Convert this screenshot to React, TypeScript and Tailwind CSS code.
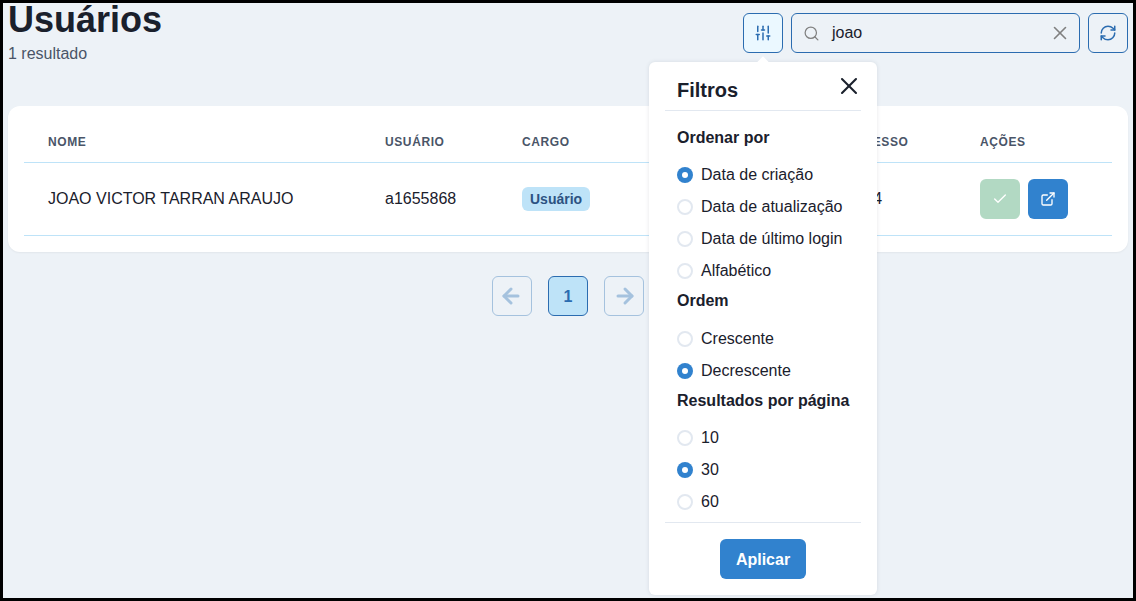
import { ArrowLeft, ArrowRight, Check, ExternalLink, RefreshCw, Search, SlidersVertical, X } from 'lucide-react';

const sortOptions = ['Data de criação', 'Data de atualização', 'Data de último login', 'Alfabético'];
const orderOptions = ['Crescente', 'Decrescente'];
const perPageOptions = ['10', '30', '60'];

const rowGrid = 'grid grid-cols-[337px_137px_280px_178px_156px] items-center';

function Radio({ label, checked }: { label: string; checked?: boolean }) {
  return (
    <label className="flex h-8 items-center gap-2">
      {checked ? (
        <span className="flex h-4 w-4 items-center justify-center rounded-full bg-[#3182ce]">
          <span className="h-[6px] w-[6px] rounded-full bg-white" />
        </span>
      ) : (
        <span className="h-4 w-4 rounded-full border-2 border-[#e2e8f0]" />
      )}
      <span>{label}</span>
    </label>
  );
}

function FilterPopover() {
  return (
    <div className="absolute left-[646px] top-[59px] z-10 flex h-[533px] w-[228px] flex-col rounded-md bg-white px-4 pb-4 shadow-[0_0_4px_rgba(45,55,72,0.12)]">
      <div className="absolute -top-[4px] left-[110px] h-2 w-2 rotate-45 bg-white" />
      <div className="relative flex h-[49px] shrink-0 items-center border-b border-[#e2e8f0] pl-3 pt-[7px]">
        <h2 className="text-[20px] font-semibold">Filtros</h2>
        <X className="absolute right-[-2px] top-[10px] h-7 w-7 text-[#1a202c]" strokeWidth={1.75} />
      </div>
      <div className="pl-3">
        <p className="mt-[15px] font-bold leading-6">Ordenar por</p>
        <div className="mt-[9px]">
          {sortOptions.map((option, i) => (
            <Radio key={option} label={option} checked={i === 0} />
          ))}
        </div>
        <p className="mt-[2px] font-bold leading-6">Ordem</p>
        <div className="mt-[10px]">
          {orderOptions.map((option, i) => (
            <Radio key={option} label={option} checked={i === 1} />
          ))}
        </div>
        <p className="mt-[2px] font-bold leading-6">Resultados por página</p>
        <div className="mt-[9px]">
          {perPageOptions.map((option, i) => (
            <Radio key={option} label={option} checked={i === 1} />
          ))}
        </div>
      </div>
      <div className="mt-[4px] border-t border-[#e2e8f0]" />
      <div className="mt-4 flex justify-center">
        <button className="h-10 rounded-md bg-[#3182ce] px-4 pt-px font-bold text-white">Aplicar</button>
      </div>
    </div>
  );
}

export default function App() {
  return (
    <div className="relative h-[601px] w-[1136px] overflow-hidden border-[3px] border-black bg-[#edf2f7] px-[5px] font-['Liberation_Sans',sans-serif] text-[#1a202c]">
      {/* Header */}
      <div className="flex items-start justify-between">
        <div>
          <h1 className="text-4xl font-bold leading-[34px]">Usuários</h1>
          <p className="mt-[5px] leading-6 text-[#4a5568]">1 resultado</p>
        </div>
        <div className="mt-[10px] flex gap-2">
          <button className="flex h-10 w-10 items-center justify-center rounded-md border border-[#2b6cb0] bg-[#ebf8ff] text-[#2b6cb0]">
            <SlidersVertical className="h-[18px] w-[18px]" />
          </button>
          <div className="flex h-10 w-[289px] items-center rounded-md border border-[#2b6cb0] pl-[11px] pr-[8px]">
            <Search className="h-[17px] w-[17px] text-[#808080]" strokeWidth={1.75} />
            <span className="ml-3 flex-1">joao</span>
            <X className="h-[22px] w-[22px] text-[#808080]" strokeWidth={1.75} />
          </div>
          <button className="flex h-10 w-10 items-center justify-center rounded-md border border-[#2b6cb0] text-[#2b6cb0]">
            <RefreshCw className="h-[18px] w-[18px]" />
          </button>
        </div>
      </div>

      {/* Table */}
      <div className="mt-[40px] rounded-xl bg-white px-4 pb-4 pt-4 shadow-[0_1px_2px_rgba(0,0,0,0.05)]">
        <div className={`${rowGrid} h-[41px] border-b border-[#bee3f8] text-xs font-bold uppercase tracking-wider text-[#4a5568]`}>
          <span className="pl-6">Nome</span>
          <span className="pl-6">Usuário</span>
          <span className="pl-6">Cargo</span>
          <span className="pl-6">Último acesso</span>
          <span className="pl-6">Ações</span>
        </div>
        <div className={`${rowGrid} h-[73px] border-b border-[#bee3f8]`}>
          <span className="pl-6">JOAO VICTOR TARRAN ARAUJO</span>
          <span className="pl-6">a1655868</span>
          <span className="pl-6">
            <span className="inline-block rounded-md bg-[#bee3f8] px-2 text-sm font-bold leading-6 text-[#2c5282]">Usuário</span>
          </span>
          <span className="pl-6">15/08/2024</span>
          <span className="flex gap-2 pl-6">
            <button className="flex h-10 w-10 items-center justify-center rounded-md bg-[#b2d9c3] text-white">
              <Check className="h-4 w-4" />
            </button>
            <button className="flex h-10 w-10 items-center justify-center rounded-md bg-[#3182ce] text-white">
              <ExternalLink className="h-4 w-4" />
            </button>
          </span>
        </div>
      </div>

      {/* Pagination */}
      <div className="mt-6 flex justify-center gap-4">
        <button className="flex h-10 w-10 items-center justify-center rounded-md border border-[#a5c2de] text-[#a5c2de]">
          <ArrowLeft className="mr-[2px] h-6 w-6" strokeWidth={3} />
        </button>
        <button className="flex h-10 w-10 items-center justify-center rounded-md border border-[#2b6cb0] bg-[#bee3f8] pt-px font-bold text-[#2b6cb0]">
          1
        </button>
        <button className="flex h-10 w-10 items-center justify-center rounded-md border border-[#a5c2de] text-[#a5c2de]">
          <ArrowRight className="ml-[2px] h-6 w-6" strokeWidth={3} />
        </button>
      </div>

      <FilterPopover />
    </div>
  );
}
